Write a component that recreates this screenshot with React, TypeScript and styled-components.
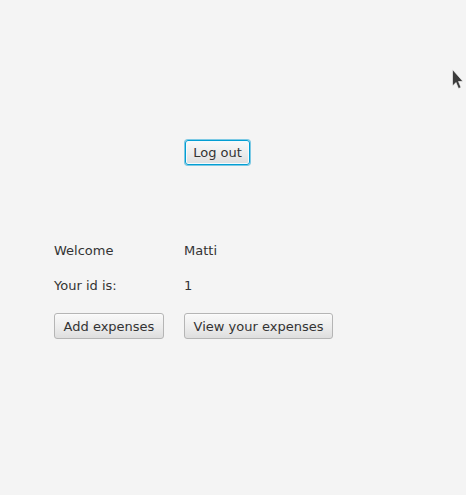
import React from "react";
import styled, { createGlobalStyle } from "styled-components";

const GlobalStyle = createGlobalStyle`
  html, body {
    margin: 0;
    padding: 0;
    background: #f4f4f4;
  }
  body {
    font-family: "DejaVu Sans", "Liberation Sans", sans-serif;
    font-size: 13px;
    color: #333333;
  }
`;

const Page = styled.div`
  position: relative;
  width: 466px;
  height: 495px;
  box-sizing: border-box;
  padding: 140px 0 0 54px;
  background: #f4f4f4;
  overflow: hidden;
`;

const TopRow = styled.div`
  display: flex;
  padding-left: 131px;
`;

const Form = styled.div`
  display: grid;
  grid-template-columns: 130px auto;
  grid-template-rows: 15px 15px 26px;
  row-gap: 20px;
  margin-top: 78px;
  align-items: center;
`;

const Label = styled.span`
  font-size: 13px;
  line-height: 15px;
  color: #333333;
  white-space: nowrap;
`;

const Button = styled.button<{ $w: number; $focused?: boolean }>`
  width: ${(p) => p.$w}px;
  height: ${(p) => (p.$focused ? 25 : 26)}px;
  box-sizing: border-box;
  padding: 0;
  margin: 0;
  font-family: "DejaVu Sans", "Liberation Sans", sans-serif;
  font-size: 13px;
  line-height: 15px;
  color: #333333;
  text-align: center;
  border-radius: 3px;
  border: 1px solid ${(p) => (p.$focused ? "#039ed3" : "#b5b5b5")};
  background: linear-gradient(to bottom, #f9f9f9 0%, #ececec 55%, #dedede 100%);
  box-shadow: ${(p) =>
    p.$focused
      ? "inset 0 0 0 1px #f3fafd, 0 0 0 1px rgba(3, 158, 211, 0.5)"
      : "inset 0 1px 0 #fbfbfb"};
  cursor: default;
  white-space: nowrap;
`;

const Cursor = styled.svg`
  position: absolute;
  left: 451px;
  top: 68px;
`;

export default function App() {
  return (
    <>
      <GlobalStyle />
      <Page>
        <TopRow>
          <Button $w={65} $focused>
            Log out
          </Button>
        </TopRow>
        <Form>
          <Label>Welcome</Label>
          <Label>Matti</Label>
          <Label>Your id is:</Label>
          <Label>1</Label>
          <div>
            <Button $w={110}>Add expenses</Button>
          </div>
          <div>
            <Button $w={149}>View your expenses</Button>
          </div>
        </Form>
        <Cursor width="14" height="24" viewBox="0 0 14 24">
          <path
            d="M1.5 1.5 L1.5 18 L5 14.5 L7.5 20.5 L10 19.5 L7.5 13.5 L12 13.5 Z"
            fill="#3c3c3c"
            stroke="#ffffff"
            strokeOpacity="0.6"
            strokeWidth="1"
          />
        </Cursor>
      </Page>
    </>
  );
}
